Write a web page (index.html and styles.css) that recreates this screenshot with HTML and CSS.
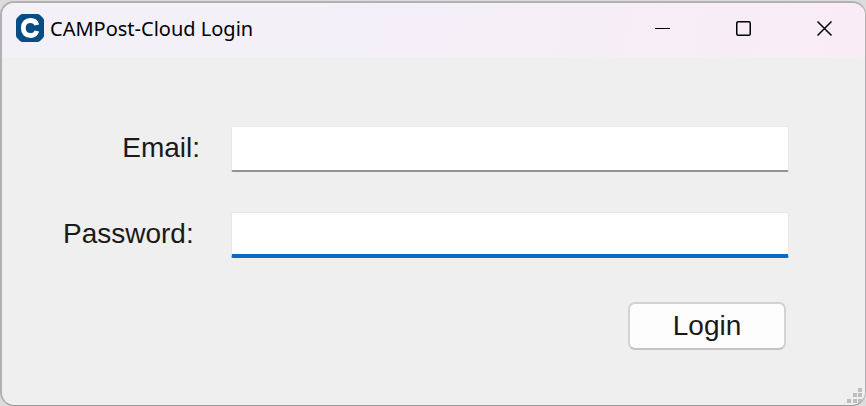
FILE: index.html
```html
<!DOCTYPE html>
<html lang="en">
<head>
    <meta charset="UTF-8">
    <meta name="viewport" content="width=device-width, initial-scale=1.0">
    <title>CAMPost-Cloud Login</title>
    <link rel="stylesheet" href="styles.css">
</head>
<body>

    <div class="window">

        <!-- Title bar -->
        <header class="title-bar">
            <svg class="app-icon" viewBox="0 0 28 28" aria-hidden="true">
                <path d="M7 0h14q2 0 3 1l3 3q1 1 1 3v14q0 2-1 3l-3 3q-1 1-3 1H7q-2 0-3-1l-3-3q-1-1-1-3V7q0-2 1-3l3-3q1-1 3-1z" fill="#064d86"/>
                <path d="M20.8 11C20 8 17.700 6.500 14.500 6.500C10 6.500 7.300 9.400 7.300 14S10 21.500 14.500 21.500C17.700 21.500 20 20 20.800 17" fill="none" stroke="#fff" stroke-width="4.800"/>
            </svg>
            <h1>CAMPost-Cloud Login</h1>
            <div class="window-buttons">
                <button type="button" aria-label="Minimize">
                    <svg viewBox="0 0 15 15"><path d="M0 7.5h15"/></svg>
                </button>
                <button type="button" aria-label="Maximize">
                    <svg viewBox="0 0 15 15"><rect class="thick" x="0.75" y="0.75" width="13.5" height="13.5" rx="1.5"/></svg>
                </button>
                <button type="button" aria-label="Close">
                    <svg viewBox="0 0 15 15"><path class="thick" d="M0.500 0.500l14 14M14.500 0.500l-14 14"/></svg>
                </button>
            </div>
        </header>

        <!-- Login form -->
        <form class="login-form">
            <div class="input-group">
                <label for="email">Email:</label>
                <input type="email" id="email">
            </div>
            <div class="input-group active">
                <label class="wide" for="password">Password:</label>
                <input type="password" id="password">
            </div>
            <button class="login-btn" type="submit">Login</button>
        </form>

        <!-- Resize grip -->
        <svg class="grip" viewBox="0 0 15 15" aria-hidden="true">
            <path d="M11 0h4v4h-4zM6 5h4v4H6zM11 5h4v4h-4zM0 11h4v4H0zM6 11h4v4H6zM11 11h4v4h-4z"/>
        </svg>

    </div>

</body>
</html>
```

FILE: styles.css
```css
* {
    margin: 0;
    padding: 0;
    box-sizing: border-box;
}

body {
    font-family: "Liberation Sans", Arial, sans-serif;
    background-color: #dcdcdc;
    color: #1a1a1a;
    padding-top: 1px;
}

.window {
    position: relative;
    min-height: calc(100vh - 1px);
    background-color: #efefef;
    border: 2px solid #b2b0b3;
    border-right-width: 1px;
    border-bottom: 1px solid #999;
    border-radius: 14px;
    overflow: hidden;
}

.title-bar {
    display: flex;
    align-items: center;
    height: 54px;
    padding-left: 14px;
    padding-bottom: 4px;
    background: linear-gradient(100deg, #f3f0f8 35%, #f6eef7 70%, #faecf6);
}

.app-icon {
    width: 28px;
    height: 28px;
    margin-right: 6px;
}

.title-bar h1 {
    flex: 1;
    font-family: "Noto Sans", sans-serif;
    font-size: 20px;
    font-weight: normal;
    color: #000;
}

.window-buttons {
    display: flex;
}

.window-buttons button {
    display: flex;
    align-items: center;
    justify-content: center;
    width: 81px;
    height: 49px;
    background: none;
    border: none;
}

.window-buttons svg {
    width: 15px;
    height: 15px;
    fill: none;
    stroke: #000;
    stroke-width: 1;
}

.window-buttons .thick {
    stroke-width: 1.5;
}

.login-form {
    display: flex;
    flex-direction: column;
    padding: 69px 76px 54px 61px;
}

.input-group {
    display: flex;
    align-items: center;
    height: 46px;
    margin-bottom: 40px;
}

label {
    width: 168px;
    padding-right: 31px;
    padding-bottom: 2px;
    font-size: 28px;
    text-align: right;
}

label.wide {
    padding-right: 41px;
}

input {
    flex: 1;
    min-width: 0;
    height: 46px;
    padding: 0 8px;
    font-family: inherit;
    font-size: 28px;
    background-color: #fff;
    border: 1px solid #e8e8e8;
    border-bottom: 2px solid #949294;
    border-radius: 2px;
    outline: none;
}

.active input {
    border-bottom: 4px solid #0a6bc4;
}

.login-btn {
    align-self: flex-end;
    width: 158px;
    height: 48px;
    margin: 4px 3px 0 0;
    font-family: inherit;
    font-size: 28px;
    color: #1a1a1a;
    background-color: #fdfdfd;
    border: 2px solid #d2d2d2;
    border-bottom-color: #c4c4c4;
    border-radius: 7px;
}

.grip {
    position: absolute;
    right: 3px;
    bottom: 2px;
    width: 15px;
    height: 15px;
    fill: #bebebe;
}
```
